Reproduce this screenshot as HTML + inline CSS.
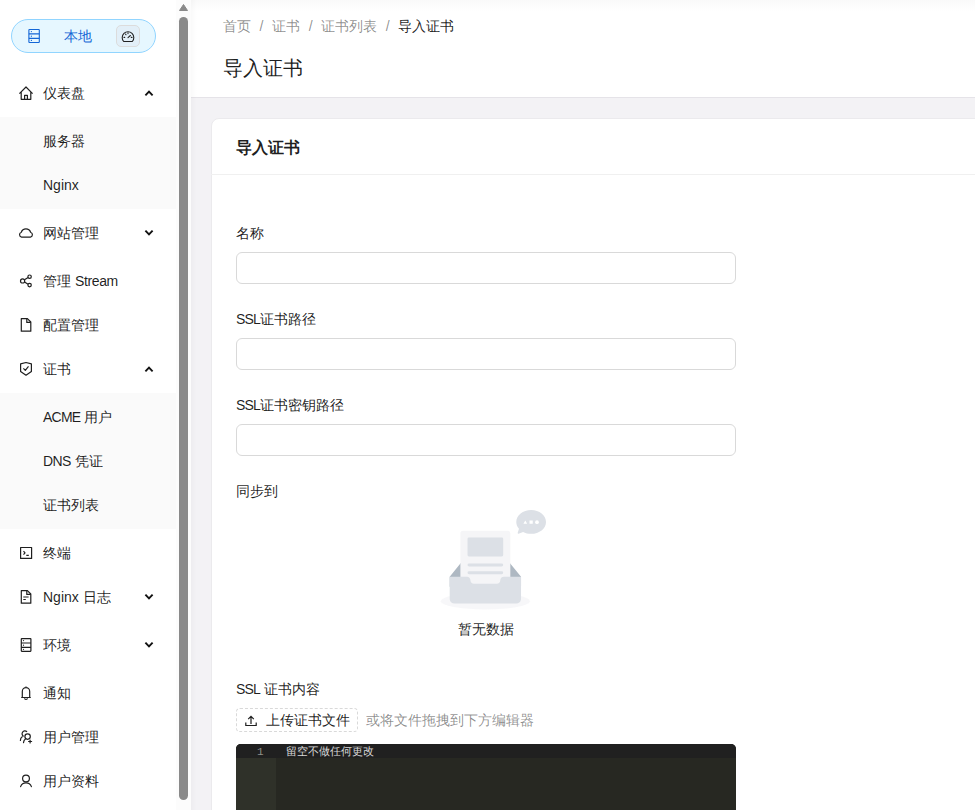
<!DOCTYPE html>
<html><head><meta charset="utf-8">
<style>
*{box-sizing:border-box;margin:0;padding:0}
html,body{width:975px;height:810px;overflow:hidden}
body{position:relative;background:#f3f2f5;font-family:"Liberation Sans",sans-serif;font-size:14px;color:rgba(0,0,0,0.88)}
.abs{position:absolute}
#side{position:absolute;left:0;top:0;width:176px;height:810px;background:#fff}
.sub{position:absolute;left:0;width:176px;background:#fafafa}
.mi{position:absolute;left:43px;height:22px;line-height:22px;white-space:nowrap;font-size:14px;color:rgba(0,0,0,0.88)}
.ic{position:absolute;left:14px;width:24px;height:24px}
.ic svg{display:block}
.arr{position:absolute;left:141px;width:16px;height:16px}
#track{position:absolute;left:176px;top:0;width:15px;height:810px;background:#fcfcfc}
#thumb{position:absolute;left:179px;top:17px;width:9px;height:783px;background:#8a8a8a;border-radius:5px}
#hdr{position:absolute;left:191px;top:0;width:784px;height:98px;background:#fff;border-bottom:1px solid #e5e3e8}
#card{position:absolute;left:211px;top:118px;width:800px;height:720px;background:#fff;border:1px solid #ebeaed;border-radius:8px}
.lbl{position:absolute;left:236px;height:22px;line-height:22px;font-size:14px;color:rgba(0,0,0,0.88);white-space:nowrap}
.inp{position:absolute;left:236px;width:500px;height:32px;border:1px solid #d9d9d9;border-radius:6px;background:#fff}
</style></head><body>
<div id="side">
  <!-- pill -->
  <div class="abs" style="left:11px;top:19px;width:145px;height:34px;border:1px solid #91d5ff;border-radius:17px;background:#e6f7ff"></div>
  <svg class="abs" style="left:22px;top:24px" width="24" height="24" viewBox="0 0 24 24">
    <g fill="none" stroke="#1366d6" stroke-width="1.1">
      <rect x="6.9" y="5.5" width="10.4" height="13" rx="0.6"/>
      <path d="M6.9 9.9H17.3M6.9 14.4H17.3"/>
    </g>
    <g fill="#1366d6"><circle cx="9.4" cy="7.6" r="0.65"/><circle cx="9.4" cy="12.2" r="0.65"/><circle cx="9.4" cy="16.4" r="0.65"/></g>
  </svg>
  <div class="abs" style="left:64px;top:25px;line-height:22px;color:#1366d6;font-size:14px">本地</div>
  <div class="abs" style="left:116px;top:25px;width:24px;height:22px;border:1px solid #dcdcdc;border-radius:5px;background:#e2eff8"></div>
  <svg class="abs" style="left:112px;top:22px" width="32" height="28" viewBox="0 0 32 28">
    <g fill="none" stroke="#222" stroke-width="1.1" stroke-linecap="round" stroke-linejoin="round">
      <path d="M11.7 19.5A5.8 5.8 0 1 1 20.3 19.5Z"/>
      <path d="M16 15.6L18.4 13.5M12 15.4H12.7M19.3 15.4H20M13.6 12.1L14 12.7M16 10.9V11.6"/>
    </g>
  </svg>

  <div class="sub" style="top:117px;height:92px"></div>
  <div class="sub" style="top:393px;height:136px"></div>

  <!-- items -->
  <div class="mi" style="top:82px">仪表盘</div>
  <div class="mi" style="top:130px">服务器</div>
  <div class="mi" style="top:174px">Nginx</div>
  <div class="mi" style="top:222px">网站管理</div>
  <div class="mi" style="top:270px">管理 <span style="letter-spacing:-0.35px">Stream</span></div>
  <div class="mi" style="top:314px">配置管理</div>
  <div class="mi" style="top:358px">证书</div>
  <div class="mi" style="top:406px"><span style="letter-spacing:-0.75px">ACME</span> 用户</div>
  <div class="mi" style="top:450px"><span style="letter-spacing:-0.6px">DNS</span> 凭证</div>
  <div class="mi" style="top:494px">证书列表</div>
  <div class="mi" style="top:542px">终端</div>
  <div class="mi" style="top:586px">Nginx 日志</div>
  <div class="mi" style="top:634px">环境</div>
  <div class="mi" style="top:682px">通知</div>
  <div class="mi" style="top:726px">用户管理</div>
  <div class="mi" style="top:770px">用户资料</div>

  <!-- icons -->
  <svg class="ic" style="top:81px" viewBox="0 0 24 24"><g fill="none" stroke="#1f1f1f" stroke-width="1.2" stroke-linejoin="round"><path d="M5.4 12.6L12 6L18.6 12.6M7.2 11.2V18.3H16.8V11.2M10.6 18.3V14.3H13.4V18.3"/></g></svg>
  <svg class="ic" style="top:222px" viewBox="0 0 24 24"><g fill="none" stroke="#1f1f1f" stroke-width="1.2"><path d="M7.6 15.2A2.6 2.6 0 0 1 7.3 10.2A4.9 4.9 0 0 1 16.6 10.2A2.6 2.6 0 0 1 16.4 15.2Z"/></g></svg>
  <svg class="ic" style="top:269px" viewBox="0 0 24 24"><g fill="none" stroke="#1f1f1f" stroke-width="1.2"><circle cx="8.6" cy="11.9" r="2.1"/><circle cx="15.6" cy="7.7" r="1.7"/><circle cx="15.6" cy="16.1" r="1.7"/><path d="M10.5 10.8L14.1 8.6M10.5 13L14.1 15.2"/></g></svg>
  <svg class="ic" style="top:313px" viewBox="0 0 24 24"><g fill="none" stroke="#1f1f1f" stroke-width="1.2" stroke-linejoin="round"><path d="M7.3 5.6H13.4L16.8 9V18.2H7.3Z"/><path d="M12.8 5.6V9.4H16.8"/></g></svg>
  <svg class="ic" style="top:357px" viewBox="0 0 24 24"><g fill="none" stroke="#1f1f1f" stroke-width="1.2" stroke-linejoin="round"><path d="M12 5.5L17.4 6.9V14.4L12 18.2L6.6 14.4V6.9Z"/><path d="M9.4 11.3L11.3 13.3L14.5 9.4"/></g></svg>
  <svg class="ic" style="top:541px" viewBox="0 0 24 24"><g fill="none" stroke="#1f1f1f" stroke-width="1.2" stroke-linejoin="round"><rect x="6.6" y="6.5" width="11" height="10.9"/><path d="M9.5 10.2L11 11.9L9.5 13.6M12.3 14.4H14.8"/></g></svg>
  <svg class="ic" style="top:585px" viewBox="0 0 24 24"><g fill="none" stroke="#1f1f1f" stroke-width="1.2" stroke-linejoin="round"><path d="M7.3 5.6H13.4L16.8 9V18.2H7.3Z"/><path d="M12.8 5.6V9.4H16.8M9.3 12H14.6M9.3 14.5H11.8"/></g></svg>
  <svg class="ic" style="top:633px" viewBox="0 0 24 24"><g fill="none" stroke="#1f1f1f" stroke-width="1.2"><rect x="7.3" y="5.6" width="9.6" height="12.7" rx="0.5"/><path d="M7.3 10H16.9M7.3 14.3H16.9"/></g><g fill="#1f1f1f"><circle cx="9.5" cy="7.6" r="0.6"/><circle cx="9.5" cy="12.2" r="0.6"/><circle cx="9.5" cy="16.3" r="0.6"/></g></svg>
  <svg class="ic" style="top:681px" viewBox="0 0 24 24"><g fill="none" stroke="#1f1f1f" stroke-width="1.2" stroke-linejoin="round"><path d="M8.3 16.4V10.4A3.7 3.7 0 0 1 15.7 10.4V16.4M7.2 16.5H16.8M10.6 17.3A1.4 1.2 0 0 0 13.4 17.3M12 5.4V6.7"/></g></svg>
  <svg class="ic" style="top:725px" viewBox="0 0 24 24"><g fill="none" stroke="#1f1f1f" stroke-width="1.2" stroke-linecap="round"><path d="M12.7 6.5A2.4 2.4 0 1 0 9.2 11.1M8.2 11.8C7 12.6 6.4 14 6.4 15.5"/><circle cx="13.6" cy="11.6" r="2.7"/><path d="M11.6 13.8C10.4 14.7 9.6 16 9.5 17.6M14.6 16.5H17.6M16.1 15V18"/></g></svg>
  <svg class="ic" style="top:769px" viewBox="0 0 24 24"><g fill="none" stroke="#1f1f1f" stroke-width="1.2" stroke-linecap="round"><circle cx="12" cy="9.5" r="3.4"/><path d="M6.6 17.6A5.8 5.8 0 0 1 17.4 17.6"/></g></svg>

  <!-- arrows -->
  <svg class="arr" style="top:85px" viewBox="0 0 16 16"><path d="M4.4 10.4L8 6.7L11.6 10.4" fill="none" stroke="#111" stroke-width="1.9"/></svg>
  <svg class="arr" style="top:225px" viewBox="0 0 16 16"><path d="M4.4 5.6L8 9.3L11.6 5.6" fill="none" stroke="#111" stroke-width="1.9"/></svg>
  <svg class="arr" style="top:361px" viewBox="0 0 16 16"><path d="M4.4 10.4L8 6.7L11.6 10.4" fill="none" stroke="#111" stroke-width="1.9"/></svg>
  <svg class="arr" style="top:589px" viewBox="0 0 16 16"><path d="M4.4 5.6L8 9.3L11.6 5.6" fill="none" stroke="#111" stroke-width="1.9"/></svg>
  <svg class="arr" style="top:637px" viewBox="0 0 16 16"><path d="M4.4 5.6L8 9.3L11.6 5.6" fill="none" stroke="#111" stroke-width="1.9"/></svg>
</div>

<div id="track"></div>
<svg class="abs" style="left:176px;top:0" width="15" height="14" viewBox="0 0 15 14"><path d="M3.5 10.5L7.5 4.5L11.5 10.5Z" fill="#8a8a8a" stroke="#8a8a8a" stroke-linejoin="round" stroke-width="1"/></svg>
<div id="thumb"></div>

<div id="hdr"></div>
<div class="abs" style="left:191px;top:0;width:784px;height:12px;background:linear-gradient(#f9f9f9,rgba(255,255,255,0))"></div>
<div class="abs" style="left:191px;top:0;width:6px;height:810px;background:linear-gradient(90deg,rgba(0,0,0,0.025),rgba(0,0,0,0))"></div>
<div class="abs" style="left:223px;top:15px;line-height:22px;white-space:nowrap;color:rgba(0,0,0,0.45)">首页<span style="margin:0 8.6px">/</span>证书<span style="margin:0 8.6px">/</span>证书列表<span style="margin:0 8.6px">/</span><span style="color:rgba(0,0,0,0.88)">导入证书</span></div>
<div class="abs" style="left:223px;top:52px;font-size:20px;line-height:32px;white-space:nowrap;color:rgba(0,0,0,0.88)">导入证书</div>

<div id="card"></div>
<div class="abs" style="left:211px;top:174px;width:764px;height:1px;background:#f0f0f0"></div>
<div class="abs" style="left:236px;top:137px;font-size:16px;font-weight:bold;line-height:22px;white-space:nowrap">导入证书</div>

<div class="lbl" style="top:222px">名称</div>
<div class="inp" style="top:252px"></div>
<div class="lbl" style="top:308px"><span style="letter-spacing:-0.8px">SSL</span>证书路径</div>
<div class="inp" style="top:338px"></div>
<div class="lbl" style="top:394px"><span style="letter-spacing:-0.8px">SSL</span>证书密钥路径</div>
<div class="inp" style="top:424px"></div>
<div class="lbl" style="top:480px">同步到</div>

<!-- empty -->
<svg class="abs" style="left:425px;top:510px" width="121" height="100" viewBox="0 0 184 152">
 <defs><linearGradient id="g1" x1="52.8%" y1="0%" x2="52.8%" y2="100%"><stop offset="0" stop-color="#DEDEDE"/><stop offset="1" stop-color="#A9A9A9" stop-opacity="0.3"/></linearGradient></defs>
 <g fill="none" fill-rule="evenodd">
  <g transform="translate(24 31.67)">
   <ellipse fill-opacity=".8" fill="#F5F5F7" cx="67.797" cy="106.89" rx="67.797" ry="12.668"/>
   <path d="M122.034 69.674L98.109 40.229c-1.148-1.386-2.826-2.225-4.593-2.225h-51.44c-1.766 0-3.444.839-4.592 2.225L13.56 69.674v15.383h108.475V69.674z" fill="#AEB8C2"/>
   <path d="M101.537 86.214L80.63 61.102c-1.001-1.207-2.507-1.867-4.048-1.867H31.724c-1.54 0-3.047.66-4.048 1.867L6.769 86.214v13.792h94.768V86.214z" fill="url(#g1)" transform="translate(13.56)"/>
   <path d="M33.83 0h67.933a4 4 0 0 1 4 4v93.344a4 4 0 0 1-4 4H33.83a4 4 0 0 1-4-4V4a4 4 0 0 1 4-4z" fill="#F5F5F7"/>
   <path d="M42.678 9.953h50.237a2 2 0 0 1 2 2V36.91a2 2 0 0 1-2 2H42.678a2 2 0 0 1-2-2V11.953a2 2 0 0 1 2-2zM42.94 49.767h49.713a2.262 2.262 0 1 1 0 4.524H42.94a2.262 2.262 0 0 1 0-4.524zM42.94 61.53h49.713a2.262 2.262 0 1 1 0 4.525H42.94a2.262 2.262 0 0 1 0-4.525zM121.813 105.032c-.775 3.071-3.497 5.36-6.735 5.36H20.515c-3.238 0-5.96-2.29-6.734-5.36a7.309 7.309 0 0 1-.222-1.79V69.675h26.318c2.907 0 5.25 2.448 5.25 5.42v.04c0 2.971 2.37 5.37 5.277 5.37h34.785c2.907 0 5.277-2.421 5.277-5.393V75.1c0-2.972 2.343-5.426 5.25-5.426h26.318v33.569c0 .617-.077 1.216-.221 1.789z" fill="#DCE0E6"/>
  </g>
  <path d="M149.121 33.292l-6.83 2.65a1 1 0 0 1-1.317-1.23l1.937-6.207c-2.589-2.944-4.109-6.534-4.109-10.408C138.802 8.102 148.92 0 161.402 0 173.881 0 184 8.102 184 18.097c0 9.995-10.118 18.097-22.599 18.097-4.528 0-8.744-1.066-12.28-2.902z" fill="#DCE0E6"/>
  <g transform="translate(149.65 15.383)" fill="#FFF">
   <ellipse cx="20.654" cy="3.167" rx="2.849" ry="2.815"/>
   <path d="M5.698 5.63H0L2.898.704zM9.259.704h4.985V5.63H9.259z"/>
  </g>
 </g>
</svg>
<div class="abs" style="left:236px;top:618px;width:500px;text-align:center;line-height:22px;color:rgba(0,0,0,0.88)">暂无数据</div>

<div class="lbl" style="top:678px"><span style="letter-spacing:-0.8px">SSL</span> 证书内容</div>
<div class="abs" style="left:236px;top:708px;width:122px;height:24px;border:1px dashed #d9d9d9;border-radius:4px;background:#fff"></div>
<svg class="abs" style="left:243px;top:713px" width="16" height="16" viewBox="0 0 16 16"><g fill="none" stroke="#1f1f1f" stroke-width="1.2"><path d="M2.8 9.5V12.5H13.2V9.5M8 11V3.5M5.2 6.2L8 3.4L10.8 6.2"/></g></svg>
<div class="abs" style="left:266px;top:709px;line-height:22px;white-space:nowrap">上传证书文件</div>
<div class="abs" style="left:366px;top:709px;line-height:22px;white-space:nowrap;color:rgba(0,0,0,0.45)">或将文件拖拽到下方编辑器</div>

<!-- editor -->
<div class="abs" style="left:236px;top:744px;width:500px;height:80px;background:#272822;border-radius:5px 5px 0 0;overflow:hidden">
  <div class="abs" style="left:0;top:0;width:40px;height:80px;background:#2f3129"></div>
  <div class="abs" style="left:0;top:0;width:500px;height:14px;background:#202020"></div>
  <div class="abs" style="left:21px;top:1px;line-height:14px;font-size:11px;color:#8f908a;font-family:'Liberation Mono',monospace">1</div>
  <div class="abs" style="left:50px;top:0;line-height:14px;font-size:11px;color:#d8d8d8;white-space:nowrap">留空不做任何更改</div>
</div>
</body></html>
